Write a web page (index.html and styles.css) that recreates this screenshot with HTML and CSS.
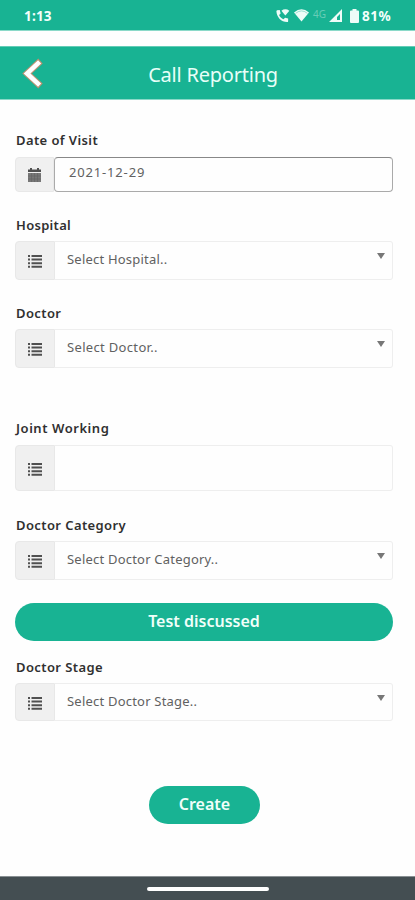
FILE: index.html
```html
<!DOCTYPE html>
<html lang="en">
<head>
<meta charset="utf-8">
<title>Call Reporting</title>
<link rel="stylesheet" href="styles.css">
</head>
<body>
<svg class="sprite" aria-hidden="true">
  <symbol id="list" viewBox="0 0 14 13">
    <path d="M0 0h2v2H0zM3.500 0H14v2H3.500zM0 3.600h2v2H0zM3.500 3.600H14v2H3.500zM0 7.200h2v2H0zM3.500 7.200H14v2H3.500zM0 10.800h2v2H0zM3.500 10.800H14v2H3.500z"/>
  </symbol>
</svg>
<div class="status">
  <span class="time">1:13</span>
  <div class="indicators">
    <svg class="call" viewBox="0 0 15 15"><path d="M1 1.300 4 1l1 3.700-1.700 1.600c1 2.200 2.500 3.700 4.700 4.700l1.700-1.700 3.300.8V13c0 .6-.4 1-1 1C5.400 13.600 1 9 .4 2.300z"/><path d="M5.800 1.800Q10 -1.300 14.300 1.800L10 7z"/></svg>
    <svg class="wifi" viewBox="0 0 15 13"><path d="M0 3.500Q7.500-3 15 3.500L7.500 12.500z"/><path class="arc" d="M1.500 4.400Q7.500-.6 13.500 4.400"/></svg>
    <span class="network">4G</span>
    <svg class="signal" viewBox="0 0 13 13"><path d="M13 0v13H0zM11 5v6H8V8z" fill-rule="evenodd"/></svg>
    <svg class="battery" viewBox="0 0 9 14"><path d="M2.500 0h4v1.500H8a1 1 0 0 1 1 1V13a1 1 0 0 1-1 1H1a1 1 0 0 1-1-1V2.500a1 1 0 0 1 1-1h1.500z"/></svg>
    <span class="percent">81%</span>
  </div>
</div>
<header class="header">
  <svg class="back" viewBox="0 0 22 34"><path class="edge" d="M18.500 4 5 16.500l13.500 12.500"/><path class="arrow" d="M17.600 4.800 5 16.500l12.600 11.700"/></svg>
  <h1 class="title">Call Reporting</h1>
</header>
<main class="form">
  <div class="field date">
    <label class="label l-date">Date of Visit</label>
    <div class="group">
      <span class="addon"><svg class="calendar" viewBox="0 0 13 14"><path d="M2 0h2v1.500h5V0h2v1.500h2V4H0V1.500h2z"/><path class="page" d="M0 5h13v9H0z"/><path class="grid" d="M0 8h13M0 11h13M3.500 5v9M6.500 5v9M9.500 5v9"/></svg></span>
      <div class="control"><span class="v-date">2021-12-29</span></div>
    </div>
  </div>
  <div class="field hospital">
    <label class="label l-hospital">Hospital</label>
    <div class="group">
      <span class="addon"><svg class="list"><use href="#list"/></svg></span>
      <div class="control"><span class="v-hospital">Select Hospital..</span><i class="caret"></i></div>
    </div>
  </div>
  <div class="field doctor">
    <label class="label l-doctor">Doctor</label>
    <div class="group">
      <span class="addon"><svg class="list"><use href="#list"/></svg></span>
      <div class="control"><span class="v-doctor">Select Doctor..</span><i class="caret"></i></div>
    </div>
  </div>
  <div class="field joint">
    <label class="label l-joint">Joint Working</label>
    <div class="group">
      <span class="addon"><svg class="list"><use href="#list"/></svg></span>
      <div class="control"></div>
    </div>
  </div>
  <div class="field category">
    <label class="label l-category">Doctor Category</label>
    <div class="group">
      <span class="addon"><svg class="list"><use href="#list"/></svg></span>
      <div class="control"><span class="v-category">Select Doctor Category..</span><i class="caret"></i></div>
    </div>
  </div>
  <button class="button discussed">Test discussed</button>
  <div class="field stage">
    <label class="label l-stage">Doctor Stage</label>
    <div class="group">
      <span class="addon"><svg class="list"><use href="#list"/></svg></span>
      <div class="control"><span class="v-stage">Select Doctor Stage..</span><i class="caret"></i></div>
    </div>
  </div>
  <button class="button create">Create</button>
</main>
<footer class="navbar"><span class="handle"></span></footer>
</body>
</html>
```
FILE: styles.css
```css
* { box-sizing: border-box; }
body {
  margin: 0;
  height: 900px;
  display: flex;
  flex-direction: column;
  background: #fefefe;
  font-family: "Noto Sans", sans-serif;
  overflow: hidden;
}
.sprite { display: none; }
svg { display: block; flex: none; }
.status {
  height: 31px;
  flex: none;
  display: flex;
  justify-content: space-between;
  padding: 0 23px 0 24px;
  background: #18b393;
  border-bottom: 1px solid #8ad9c8;
  color: #f2fffb;
  font: bold 13.5px/32px "Noto Sans", sans-serif;
}
.time { letter-spacing: .2px; }
.indicators { display: flex; align-items: center; padding-top: 1px; fill: #eefcf8; }
.call { width: 14px; height: 14px; }
.wifi { width: 15px; height: 13px; margin-left: 4px; }
.arc { fill: none; stroke: #18b393; stroke-width: .4; }
.network { width: 14px; margin-left: 4px; font-size: 10px; font-weight: 400; line-height: 24px; padding-bottom: 4px; color: #67cdb7; }
.signal { width: 13px; height: 13px; margin-left: 2px; }
.battery { width: 9px; height: 14px; margin: 0 3px 0 8px; }
.percent { width: 30px; letter-spacing: .5px; }
.header {
  height: 54px;
  flex: none;
  margin-top: 15px;
  display: grid;
  grid-template-columns: 64px 1fr 53px;
  align-items: center;
  background: #18b393;
  border-top: 1px solid #63ccb6;
  border-bottom: 1px solid #8ad9c8;
}
.back { width: 22px; height: 34px; margin: 2px 0 0 22px; }
.edge, .arrow { fill: none; }
.edge { stroke: #b99272; stroke-width: 6.5; }
.arrow { stroke: #fff; stroke-width: 4.5; }
.title { margin: 0; padding-top: 3px; text-align: center; color: #e8fff8; font: 400 20px/28px "Noto Sans", sans-serif; letter-spacing: -.22px; }
.form { flex: 1; display: flex; flex-direction: column; padding: 31px 22px 0 15px; }
.label { display: block; height: 18px; padding-left: 1px; font-size: 13px; font-weight: 600; line-height: 18px; letter-spacing: .4px; color: #303030; white-space: nowrap; }
.l-hospital { letter-spacing: .3px; }
.l-joint { letter-spacing: .55px; }
.group { display: flex; height: 39px; margin-top: 7px; }
.addon { width: 40px; flex: none; display: flex; align-items: center; justify-content: center; background: #f0f0f0; border: 1px solid #e8e8e8; border-radius: 4px 0 0 4px; }
.list { width: 14px; height: 13px; margin-top: 2px; fill: #505050; }
.calendar { width: 13px; height: 14px; margin-top: 1px; fill: #505050; }
.page { fill: #777; }
.grid { stroke: #626262; stroke-width: .6; }
.control { flex: 1; display: flex; justify-content: space-between; padding: 7px 7px 0 12px; border: 1px solid #eeeeee; border-left: 0; border-radius: 0 3px 3px 0; font-size: 13px; line-height: 21px; letter-spacing: .21px; color: #616161; white-space: nowrap; }
.v-doctor { letter-spacing: .33px; }
.v-date { letter-spacing: .83px; }
.caret { width: 8px; height: 6px; margin-top: 4px; background: #777; clip-path: polygon(0 0, 100% 0, 50% 100%); }
.hospital, .doctor { margin-top: 24px; }
.joint { margin-top: 51px; }
.category { margin-top: 25px; }
.stage { margin-top: 17px; }
.date .group { height: 35px; margin-top: 8px; }
.date .addon { width: 39px; }
.date .control { padding: 4px 14px; border: 1px solid #aaa; border-top-color: #888; border-radius: 4px; }
.joint .group { height: 46px; margin-top: 8px; }
.stage .group { height: 38px; }
.button { border: 0; padding: 0 0 2px; height: 38px; border-radius: 19px; background: #18b393; color: #f0fffa; font: 600 16px/36px "Noto Sans", sans-serif; }
.discussed { margin-top: 23px; }
.create { align-self: center; width: 111px; margin: 65px 0 0 1px; }
.navbar { height: 24px; flex: none; display: flex; justify-content: center; padding-top: 10px; background: #444e52; border-top: 1px solid #899093; }
.handle { width: 122px; height: 4px; border-radius: 2px; background: #fff; }
```
